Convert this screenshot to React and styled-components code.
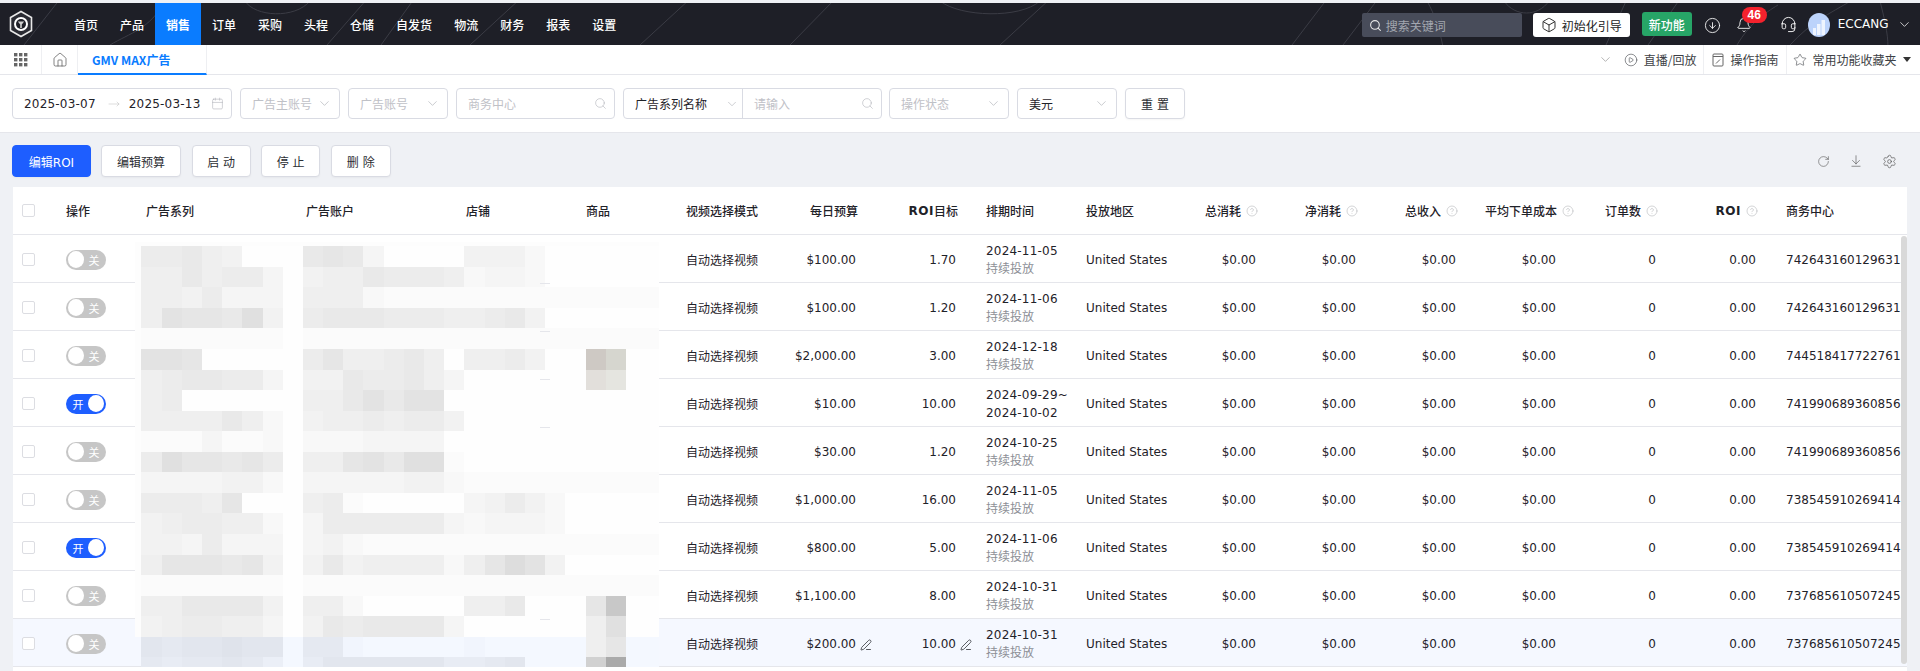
import styled, { createGlobalStyle } from "styled-components";
import {
  ArrowDownToLine,
  Bell,
  Box,
  Calendar,
  ChevronDown,
  CircleArrowDown,
  CircleHelp,
  CirclePlay,
  Headset,
  Home,
  MoveRight,
  PenLine,
  RotateCw,
  Search,
  Settings,
  Star,
} from "lucide-react";

const NAV_ITEMS = ["首页", "产品", "销售", "订单", "采购", "头程", "仓储", "自发货", "物流", "财务", "报表", "设置"];

const COLS = "43px 80px 160px 160px 120px 100px 100px 90px 100px 110px 90px 100px 100px 100px 100px 100px 100px 141px";

const ROWS = [
  { budget: "$100.00", target: "1.70", start: "2024-11-05", center: "742643160129631" },
  { budget: "$100.00", target: "1.20", start: "2024-11-06", center: "742643160129631" },
  { budget: "$2,000.00", target: "3.00", start: "2024-12-18", center: "744518417722761" },
  { budget: "$10.00", target: "10.00", start: "2024-09-29~", end: "2024-10-02", on: true, center: "741990689360856" },
  { budget: "$30.00", target: "1.20", start: "2024-10-25", center: "741990689360856" },
  { budget: "$1,000.00", target: "16.00", start: "2024-11-05", center: "738545910269414" },
  { budget: "$800.00", target: "5.00", start: "2024-11-06", on: true, center: "738545910269414" },
  { budget: "$1,100.00", target: "8.00", start: "2024-10-31", center: "737685610507245" },
  { budget: "$200.00", target: "10.00", start: "2024-10-31", center: "737685610507245", hover: true },
];

// one character per block, base 36, the higher the darker
const MOSAIC = [
  "66754000" + "78730000" + "4442" + "000000",
  "55756630" + "45576665" + "2332" + "000000",
  "55463330" + "55521111" + "1111" + "111111",
  "5988" + "7a40" + "67776665" + "5674" + "000000",
  "11111110" + "11111111" + "1111" + "111111",
  "99800000" + "68556750" + "5564" + "00bb00",
  "56776630" + "44766753" + "0000" + "008800",
  "56000000" + "55797990" + "0000" + "000000",
  "55557520" + "45565664" + "0000" + "000000",
  "11131120" + "22233330" + "0000" + "000000",
  "6a887860" + "5589" + "7aa1" + "0000" + "000000",
  "33334420" + "33333442" + "1111" + "111111",
  "66658000" + "56100000" + "3464" + "200000",
  "45665520" + "36666663" + "2333" + "200000",
  "44363330" + "34211111" + "1111" + "111111",
  "58887840" + "47455552" + "58b9" + "400000",
  "11111110" + "11111111" + "1111" + "111111",
  "55777740" + "55200000" + "5570" + "008i00",
  "45665530" + "47677773" + "0000" + "005a00",
  "87889882" + "77322222" + "3222" + "225822",
  "76778752" + "68888886" + "6782" + "22fs22",
];

const BROWN_BLOCKS = { "5:22": "#cec9c4", "5:23": "#d6d6cf", "6:22": "#e2dfdb", "6:23": "#e5e5e0" };

const SEPARATOR_TICKS = [41, 89, 137, 185, 377];

function blockColor(row, col, ch) {
  const brown = BROWN_BLOCKS[`${row}:${col}`];
  if (brown) return brown;
  const gray = 254 - 3 * parseInt(ch, 36);
  if (row >= 19 && col !== 22 && col !== 23) {
    return `rgb(${gray - 4}, ${gray}, ${Math.min(gray + 8, 255)})`;
  }
  return `rgb(${gray}, ${gray}, ${gray})`;
}

export default function App() {
  return (
    <Page>
      <GlobalStyle />
      <TopBar>
        <Contours viewBox="0 0 1920 42" aria-hidden="true">
          <path d="M24 42 L60 -4 M327 42 L367 -4 M381 42 L414 -4 M470 42 L520 -4 M640 42 L690 -4 M790 42 L835 -4 M1000 42 L1050 -4 M1292 42 L1327 -4 M1343 42 L1378 -4 M1606 42 L1627 -4 M1648 42 L1680 -4 M1737 42 C1750 20 1765 10 1778 2 M1790 42 C1810 20 1830 10 1851 -2" />
          <path d="M245 -2 C255 14 295 16 310 -2 M1427 -2 C1435 12 1440 28 1443 44 M1504 -2 C1515 14 1538 14 1549 -2 M1880 -2 C1884 14 1888 30 1888 44 M110 42 C130 30 150 26 165 -2 M940 -2 C960 14 1020 16 1040 -2" />
        </Contours>
        <LogoCell>
          <svg width="26" height="28" viewBox="0 0 26 28" fill="none">
            <path d="M13 1.5 L23.5 7.5 V20.5 L13 26.5 L2.5 20.5 V7.5 Z" stroke="#e8e8e8" strokeWidth="1.6" fill="#2a2b33" />
            <circle cx="13" cy="14" r="7" fill="#fff" />
            <circle cx="13" cy="14" r="5" fill="#1e1f27" />
            <path d="M9.8 11.5 L16.2 11.5 L13.8 14.5 V18 H12.2 V14.5 Z" fill="#cfcfcf" />
          </svg>
        </LogoCell>
        <Nav>
          {NAV_ITEMS.map((item) => (
            <NavItem key={item} $active={item === "销售"}>{item}</NavItem>
          ))}
        </Nav>
        <TopRight>
          <SearchBox>
            <Search size={13} strokeWidth={2} />
            搜索关键词
          </SearchBox>
          <GuideButton>
            <Box size={16} strokeWidth={1.4} />
            初始化引导
          </GuideButton>
          <NewButton>新功能</NewButton>
          <DownloadIcon size={17} strokeWidth={1.2} />
          <BellWrap>
            <Bell size={16} strokeWidth={1.3} />
            <Badge>46</Badge>
          </BellWrap>
          <HeadsetIcon size={17} strokeWidth={1.3} />
          <Avatar>
            <svg width="14" height="16" viewBox="0 0 14 16" fill="#fff" fillOpacity="0.75">
              <rect x="1" y="9" width="3" height="7" />
              <rect x="5" y="5" width="3.5" height="11" />
              <rect x="9.5" y="1" width="3.5" height="15" />
            </svg>
          </Avatar>
          <UserName>ECCANG</UserName>
          <ChevronDown size={15} strokeWidth={1.2} />
        </TopRight>
      </TopBar>

      <TabBar>
        <TabIconCell $width={42}>
          <svg width="14" height="14" viewBox="0 0 14 14" fill="#666">
            {[0, 5, 10].flatMap((y) =>
              [0, 5, 10].map((x) => <rect key={`${x}-${y}`} x={x} y={y} width="3.4" height="3.4" />)
            )}
          </svg>
        </TabIconCell>
        <TabIconCell $width={36}>
          <Home size={16} strokeWidth={1.1} color="#555" />
        </TabIconCell>
        <ActiveTab>GMV MAX广告</ActiveTab>
        <TabTools>
          <ChevronDown size={15} strokeWidth={1} color="#888" />
          <TabTool $first>
            <CirclePlay size={14} strokeWidth={1} />
            直播/回放
          </TabTool>
          <TabTool>
            <svg width="12" height="14" viewBox="0 0 12 14" fill="none" stroke="#666">
              <rect x="1" y="1" width="10" height="12" rx="1" />
              <path d="M1 3.5 H11" />
              <path d="M4 10.5 L8 6.5" />
            </svg>
            操作指南
          </TabTool>
          <TabTool $last>
            <Star size={14} strokeWidth={1} />
            常用功能收藏夹
            <Caret />
          </TabTool>
        </TabTools>
      </TabBar>

      <FilterBar>
        <Field $width={220}>
          <DateText>2025-03-07</DateText>
          <DateArrow size={12} strokeWidth={1} />
          <DateText>2025-03-13</DateText>
          <FieldIcon as={Calendar} size={13} strokeWidth={1} />
        </Field>
        <Field $width={100}>
          <Placeholder>广告主账号</Placeholder>
          <FieldIcon as={ChevronDown} size={15} strokeWidth={1} />
        </Field>
        <Field $width={100}>
          <Placeholder>广告账号</Placeholder>
          <FieldIcon as={ChevronDown} size={15} strokeWidth={1} />
        </Field>
        <Field $width={159}>
          <Placeholder>商务中心</Placeholder>
          <FieldIcon as={Search} size={13} strokeWidth={1} />
        </Field>
        <FieldGroup>
          <GroupLabel>
            广告系列名称
            <FieldIcon as={ChevronDown} size={14} strokeWidth={1} />
          </GroupLabel>
          <GroupInput>
            <Placeholder>请输入</Placeholder>
            <FieldIcon as={Search} size={13} strokeWidth={1} />
          </GroupInput>
        </FieldGroup>
        <Field $width={120}>
          <Placeholder>操作状态</Placeholder>
          <FieldIcon as={ChevronDown} size={15} strokeWidth={1} />
        </Field>
        <Field $width={100}>
          <FieldValue>美元</FieldValue>
          <FieldIcon as={ChevronDown} size={15} strokeWidth={1} />
        </Field>
        <ActionButton $width={60} $height={31}>重 置</ActionButton>
      </FilterBar>

      <Content>
        <Toolbar>
          <PrimaryButton>编辑ROI</PrimaryButton>
          <ActionButton $width={80}>编辑预算</ActionButton>
          <ActionButton $width={59}>启 动</ActionButton>
          <ActionButton $width={59}>停 止</ActionButton>
          <ActionButton $width={60}>删 除</ActionButton>
          <ToolIcons>
            <RotateCw size={13} strokeWidth={1.1} />
            <ArrowDownToLine size={14} strokeWidth={1.1} />
            <Settings size={15} strokeWidth={1.1} />
          </ToolIcons>
        </Toolbar>

        <Table>
          <HeadRow>
            <CheckCell><CheckBox /></CheckCell>
            <HeadCell>操作</HeadCell>
            <HeadCell>广告系列</HeadCell>
            <HeadCell>广告账户</HeadCell>
            <HeadCell>店铺</HeadCell>
            <HeadCell>商品</HeadCell>
            <HeadCell>视频选择模式</HeadCell>
            <HeadCell $right>每日预算</HeadCell>
            <HeadCell $right><Latin>ROI</Latin>目标</HeadCell>
            <HeadCell $wide>排期时间</HeadCell>
            <HeadCell>投放地区</HeadCell>
            <HeadCell $right>总消耗<HelpIcon size={12} strokeWidth={1} /></HeadCell>
            <HeadCell $right>净消耗<HelpIcon size={12} strokeWidth={1} /></HeadCell>
            <HeadCell $right>总收入<HelpIcon size={12} strokeWidth={1} /></HeadCell>
            <HeadCell $right $overhang>平均下单成本<HelpIcon size={12} strokeWidth={1} /></HeadCell>
            <HeadCell $right>订单数<HelpIcon size={12} strokeWidth={1} /></HeadCell>
            <HeadCell $right><Latin>ROI</Latin><HelpIcon size={12} strokeWidth={1} /></HeadCell>
            <HeadCell $wide>商务中心</HeadCell>
          </HeadRow>

          <TableBody>
            {ROWS.map((row) => (
              <BodyRow key={row.center + row.start} $hover={row.hover}>
                <CheckCell><CheckBox /></CheckCell>
                <Cell>
                  <Toggle $on={row.on}>
                    <Knob />
                    <ToggleLabel>{row.on ? "开" : "关"}</ToggleLabel>
                  </Toggle>
                </Cell>
                <Cell />
                <Cell />
                <Cell />
                <Cell />
                <Cell>自动选择视频</Cell>
                <Cell $right>
                  {row.budget}
                  {row.hover && <EditIcon size={12} strokeWidth={1.5} />}
                </Cell>
                <Cell $right>
                  {row.target}
                  {row.hover && <EditIcon size={12} strokeWidth={1.5} />}
                </Cell>
                <ScheduleCell>
                  <DateText>{row.start}</DateText>
                  {row.end ? <DateText>{row.end}</DateText> : <Continuous>持续投放</Continuous>}
                </ScheduleCell>
                <Cell>United States</Cell>
                <Cell $right>$0.00</Cell>
                <Cell $right>$0.00</Cell>
                <Cell $right>$0.00</Cell>
                <Cell $right>$0.00</Cell>
                <Cell $right>0</Cell>
                <Cell $right>0.00</Cell>
                <Cell $wide>{row.center}</Cell>
              </BodyRow>
            ))}

            <Mosaic aria-hidden="true">
              {MOSAIC.map((line, r) =>
                line.split("").map((ch, c) => (
                  <div key={`${r}-${c}`} style={{ backgroundColor: blockColor(r, c, ch) }} />
                ))
              )}
              {SEPARATOR_TICKS.map((top) => (
                <SeparatorTick key={top} style={{ top }} />
              ))}
            </Mosaic>
            <ScrollThumb />
          </TableBody>
        </Table>
      </Content>
    </Page>
  );
}

const GlobalStyle = createGlobalStyle`
  html, body {
    margin: 0;
    height: 100%;
    overflow: hidden;
  }
  body {
    font-family: "DejaVu Sans", "Noto Sans CJK SC", sans-serif;
    font-size: 12px;
    color: #1f2229;
    background: #eff1f5;
  }
`;

const Page = styled.div`
  height: 671px;
  padding-top: 3px;
  box-sizing: border-box;
  background: #eff1f5;
  display: flex;
  flex-direction: column;
  overflow: hidden;
`;

const TopBar = styled.header`
  position: relative;
  flex: none;
  height: 42px;
  display: flex;
  align-items: center;
  background: #1e1f27;
`;

const Contours = styled.svg`
  position: absolute;
  inset: 0;
  width: 100%;
  height: 100%;
  pointer-events: none;
  fill: none;
  stroke: #3b3c45;
  stroke-width: 1;
`;

const LogoCell = styled.div`
  position: relative;
  flex: none;
  width: 63px;
  height: 100%;
  display: flex;
  align-items: center;
  padding-left: 8px;
  box-sizing: border-box;
`;

const Nav = styled.nav`
  position: relative;
  height: 100%;
  display: flex;
`;

const NavItem = styled.a`
  padding: 0 11px;
  display: flex;
  align-items: center;
  font-family: "Noto Sans CJK SC", sans-serif;
  font-weight: ${(p) => (p.$active ? 700 : 500)};
  color: #fff;
  background: ${(p) => (p.$active ? "#0a7cff" : "transparent")};
`;

const TopRight = styled.div`
  position: relative;
  margin-left: auto;
  height: 100%;
  display: flex;
  align-items: center;
  padding-right: 8.5px;
  color: #fff;
`;

const SearchBox = styled.div`
  width: 160px;
  height: 24px;
  box-sizing: border-box;
  padding-left: 7px;
  margin-top: 2px;
  display: flex;
  align-items: center;
  gap: 4px;
  border-radius: 2px;
  background: #484c5a;
  color: #a3a7b0;
  font-family: "Noto Sans CJK SC", sans-serif;
  svg {
    color: #e8e8e8;
  }
`;

const GuideButton = styled.button`
  width: 97px;
  height: 24px;
  margin: 2px 0 0 11px;
  padding: 0;
  border: 0;
  display: flex;
  align-items: center;
  justify-content: center;
  gap: 5px;
  border-radius: 3px;
  background: #fff;
  color: #222;
  font: 12px "Noto Sans CJK SC", sans-serif;
`;

const NewButton = styled.button`
  width: 50px;
  height: 24px;
  margin: 0 0 0 12px;
  padding: 0;
  border: 0;
  border-radius: 3px;
  background: #27a567;
  color: #fff;
  font: 500 12px "Noto Sans CJK SC", sans-serif;
`;

const DownloadIcon = styled(CircleArrowDown)`
  margin: 2px 0 0 12px;
`;

const BellWrap = styled.div`
  position: relative;
  display: flex;
  margin: 2px 0 0 15px;
`;

const Badge = styled.span`
  position: absolute;
  left: 6px;
  top: -10px;
  min-width: 25px;
  height: 16px;
  border-radius: 8px;
  background: #f5222d;
  color: #fff;
  text-align: center;
  font: 700 12px/16px "Liberation Sans", sans-serif;
`;

const HeadsetIcon = styled(Headset)`
  margin: 0 0 0 28px;
`;

const Avatar = styled.div`
  width: 22px;
  height: 24px;
  margin: 1px 0 0 11px;
  border-radius: 50%;
  background: #bcd3fb;
  display: flex;
  align-items: flex-end;
  justify-content: center;
  padding-bottom: 2px;
  box-sizing: border-box;
`;

const UserName = styled.span`
  margin: 0 8px 0 8px;
  font-size: 12px;
`;

const TabBar = styled.div`
  flex: none;
  height: 30px;
  display: flex;
  align-items: stretch;
  box-sizing: border-box;
  background: #fff;
  border-bottom: 1px solid #e5e6eb;
`;

const TabIconCell = styled.div`
  width: ${(p) => p.$width}px;
  box-sizing: border-box;
  display: flex;
  align-items: center;
  justify-content: center;
  border-right: 1px solid #eeeff2;
`;

const ActiveTab = styled.div`
  width: 129px;
  box-sizing: border-box;
  padding-left: 14px;
  display: flex;
  align-items: center;
  border-right: 1px solid #eeeff2;
  border-bottom: 2px solid #0a7cff;
  margin-bottom: -1px;
  color: #0a7cff;
  font: 600 12px "Noto Sans CJK SC", sans-serif;
`;

const TabTools = styled.div`
  margin-left: auto;
  padding-right: 1.5px;
  display: flex;
  align-items: stretch;
  color: #3d3f45;
  font-family: "Noto Sans CJK SC", sans-serif;
  > svg {
    align-self: center;
    margin-right: 3px;
  }
`;

const TabTool = styled.div`
  display: flex;
  align-items: center;
  gap: ${(p) => (p.$last ? 5 : 6)}px;
  padding: 0 ${(p) => (p.$first ? 7 : 8)}px 0 ${(p) => (p.$last ? 6 : 8)}px;
  border-left: ${(p) => (p.$first ? "0" : "1px solid #eeeff2")};
`;

const Caret = styled.i`
  width: 0;
  height: 0;
  margin-left: 1px;
  border-left: 4px solid transparent;
  border-right: 4px solid transparent;
  border-top: 5px solid #333;
`;

const FilterBar = styled.div`
  flex: none;
  height: 58px;
  padding: 13px 12px 0;
  box-sizing: border-box;
  display: flex;
  align-items: flex-start;
  gap: 8px;
  background: #fff;
  border-bottom: 1px solid #e5e6eb;
`;

const Field = styled.div`
  width: ${(p) => p.$width}px;
  height: 31px;
  flex: none;
  box-sizing: border-box;
  padding: 0 11px;
  display: flex;
  align-items: center;
  border: 1px solid #d9dbe3;
  border-radius: 4px;
  background: #fff;
`;

const DateText = styled.span`
  letter-spacing: 0.2px;
  white-space: nowrap;
`;

const DateArrow = styled(MoveRight)`
  flex: none;
  margin: 0 9px 0 12px;
  color: #bbb;
`;

const Placeholder = styled.span`
  color: #bfc1c7;
  white-space: nowrap;
  font-family: "Noto Sans CJK SC", sans-serif;
`;

const FieldValue = styled.span`
  font-family: "Noto Sans CJK SC", sans-serif;
`;

const FieldIcon = styled.svg`
  flex: none;
  margin-left: auto;
  margin-right: -4px;
  color: #a9abb2;
`;

const FieldGroup = styled.div`
  width: 259px;
  height: 31px;
  flex: none;
  box-sizing: border-box;
  margin-right: -1px;
  display: flex;
  border: 1px solid #d9dbe3;
  border-radius: 4px;
`;

const GroupLabel = styled.div`
  width: 119px;
  box-sizing: border-box;
  padding: 0 7px 0 11px;
  display: flex;
  align-items: center;
  border-right: 1px solid #d9dbe3;
  font-family: "Noto Sans CJK SC", sans-serif;
  white-space: nowrap;
`;

const GroupInput = styled.div`
  flex: 1;
  padding: 0 11px;
  display: flex;
  align-items: center;
`;

const Content = styled.main`
  flex: 1;
  min-height: 0;
  padding: 12px 13px 0;
  display: flex;
  flex-direction: column;
`;

const Toolbar = styled.div`
  flex: none;
  height: 32px;
  margin: 0 0 10px -1px;
  display: flex;
  align-items: center;
  gap: 10.6px;
`;

const ActionButton = styled.button`
  width: ${(p) => p.$width}px;
  height: ${(p) => p.$height || 32}px;
  padding: 0;
  flex: none;
  box-sizing: border-box;
  border: 1px solid #d9dbe3;
  border-radius: 4px;
  background: #fff;
  color: #2c2e33;
  font: 12px "DejaVu Sans", "Noto Sans CJK SC", sans-serif;
  box-shadow: 0 1px 2px rgba(0, 0, 0, 0.04);
`;

const PrimaryButton = styled(ActionButton)`
  width: 79px;
  border-color: #1e5eff;
  background: #1e5eff;
  color: #fff;
  margin-right: -0.6px;
`;

const ToolIcons = styled.div`
  margin-left: auto;
  margin-right: 10px;
  display: flex;
  align-items: center;
  gap: 19px;
  color: #555;
`;

const Table = styled.section`
  flex: 1;
  min-height: 0;
  display: flex;
  flex-direction: column;
  background: #fff;
  overflow: hidden;
`;

const HeadRow = styled.div`
  flex: none;
  height: 48px;
  box-sizing: border-box;
  display: grid;
  grid-template-columns: ${COLS};
  align-items: center;
  border-bottom: 1px solid #e5e6eb;
`;

const HeadCell = styled.div`
  display: flex;
  align-items: center;
  justify-content: ${(p) => (p.$right ? "flex-end" : "flex-start")};
  padding: ${(p) => (p.$right ? "0 8px 0 0" : p.$wide ? "0 0 0 20px" : "0 0 0 10px")};
  margin-right: ${(p) => (p.$overhang ? "-16px" : "0")};
  font-weight: 500;
  white-space: nowrap;
`;

const Latin = styled.span`
  font-weight: 700;
  letter-spacing: 0.5px;
`;

const HelpIcon = styled(CircleHelp)`
  margin-left: 5px;
  color: #a8aaaf;
`;

const CheckCell = styled.div`
  padding-left: 9px;
`;

const CheckBox = styled.div`
  width: 13px;
  height: 13px;
  box-sizing: border-box;
  border: 1px solid #dcdde2;
  border-radius: 2px;
  background: #fff;
`;

const TableBody = styled.div`
  position: relative;
  flex: 1;
  min-height: 0;
  overflow: hidden;
`;

const BodyRow = styled.div`
  height: 48px;
  box-sizing: border-box;
  padding-top: 2px;
  display: grid;
  grid-template-columns: ${COLS};
  align-items: center;
  border-bottom: 1px solid #e5e6eb;
  background: ${(p) => (p.$hover ? "#f5f8ff" : "#fff")};
`;

const Cell = styled.div`
  position: relative;
  padding: ${(p) => (p.$right ? "0 10px 0 0" : p.$wide ? "0 0 0 20px" : "0 0 0 10px")};
  text-align: ${(p) => (p.$right ? "right" : "left")};
  white-space: nowrap;
  overflow: ${(p) => (p.$wide ? "hidden" : "visible")};
`;

const EditIcon = styled(PenLine)`
  position: absolute;
  right: -6px;
  top: 2px;
  color: #26282d;
`;

const ScheduleCell = styled.div`
  padding-left: 20px;
  display: flex;
  flex-direction: column;
  line-height: 18px;
  white-space: nowrap;
`;

const Continuous = styled.span`
  color: #8d8f96;
`;

const Toggle = styled.div`
  width: 40px;
  height: 20px;
  box-sizing: border-box;
  padding: 0 2px;
  display: flex;
  flex-direction: ${(p) => (p.$on ? "row-reverse" : "row")};
  align-items: center;
  border-radius: 10px;
  background: ${(p) => (p.$on ? "#1e5eff" : "#c6c6c6")};
`;

const Knob = styled.span`
  flex: none;
  width: 16px;
  height: 17px;
  border-radius: 50%;
  background: #fff;
`;

const ToggleLabel = styled.span`
  flex: 1;
  text-align: center;
  color: #fff;
  font: 11px "Noto Sans CJK SC", sans-serif;
`;

const Mosaic = styled.div`
  position: absolute;
  left: 122px;
  top: 7px;
  width: 524px;
  height: 425px;
  box-sizing: border-box;
  padding: 4.3px 0 0 6.4px;
  display: grid;
  grid-template-columns: repeat(26, 20.2px);
  grid-auto-rows: 20.55px;
  overflow: hidden;
  background: linear-gradient(#fdfdfd 395px, transparent 395px);
`;

const SeparatorTick = styled.span`
  position: absolute;
  left: 405px;
  width: 10px;
  height: 1px;
  background: #e5e6eb;
`;

const ScrollThumb = styled.div`
  position: absolute;
  right: 0;
  top: 1px;
  width: 6px;
  height: 428px;
  border-radius: 3px;
  background: #d9d9d9;
`;
